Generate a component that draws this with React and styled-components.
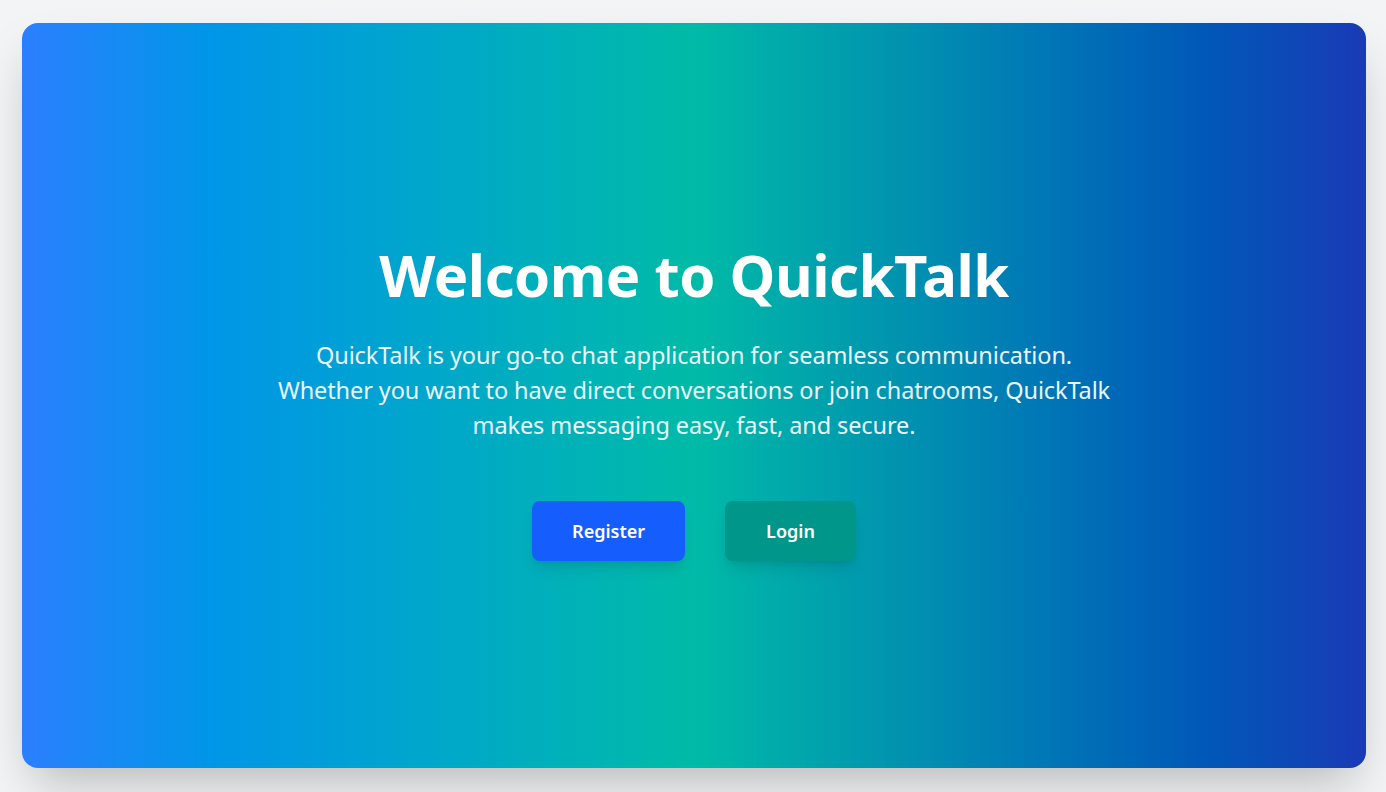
import styled, { createGlobalStyle } from "styled-components";

const GlobalStyle = createGlobalStyle`
  * {
    box-sizing: border-box;
  }
  html, body {
    margin: 0;
    padding: 0;
    background: #f3f4f6;
    font-family: "Noto Sans", "Open Sans", sans-serif;
  }
`;

const Page = styled.div`
  min-height: 100vh;
  padding: 23px 20px 24px 22px;
  display: flex;
`;

const Hero = styled.section`
  flex: 1;
  min-height: 745px;
  border-radius: 16px;
  background: linear-gradient(
    90deg,
    #2b7fff 0%,
    #0096e8 14%,
    #00bba7 50%,
    #0077b6 76%,
    #0058b8 88%,
    #1a3ab6 100%
  );
  box-shadow: 0 25px 50px -12px rgba(0, 0, 0, 0.25);
  display: flex;
  flex-direction: column;
  align-items: center;
  justify-content: center;
  padding-top: 14px;
  text-align: center;
  color: #fff;
`;

const Title = styled.h1`
  margin: 0 0 33px;
  font-size: 58px;
  line-height: 60px;
  font-weight: 700;
  letter-spacing: -0.5px;
`;

const Intro = styled.p`
  margin: 0 0 58px;
  max-width: 900px;
  font-size: 23.5px;
  line-height: 35px;
  letter-spacing: -0.1px;
  color: #eaf6ff;
`;

const Actions = styled.div`
  display: flex;
  gap: 40px;
`;

const Button = styled.button`
  height: 60px;
  border: 0;
  border-radius: 8px;
  padding: 0 ${(p) => p.$px}px;
  font-family: inherit;
  font-size: 18px;
  line-height: 28px;
  font-weight: 600;
  color: #fff;
  background: ${(p) => p.$bg};
  box-shadow: 0 10px 15px -3px rgba(0, 0, 0, 0.1),
    0 4px 6px -4px rgba(0, 0, 0, 0.1);
  cursor: pointer;
`;

export default function App() {
  return (
    <>
      <GlobalStyle />
      <Page>
        <Hero>
          <Title>Welcome to QuickTalk</Title>
          <Intro>
            QuickTalk is your go-to chat application for seamless communication.
            <br />
            Whether you want to have direct conversations or join chatrooms, QuickTalk
            <br />
            makes messaging easy, fast, and secure.
          </Intro>
          <Actions>
            <Button $bg="#155dfc" $px={40}>Register</Button>
            <Button $bg="#009689" $px={41}>Login</Button>
          </Actions>
        </Hero>
      </Page>
    </>
  );
}
